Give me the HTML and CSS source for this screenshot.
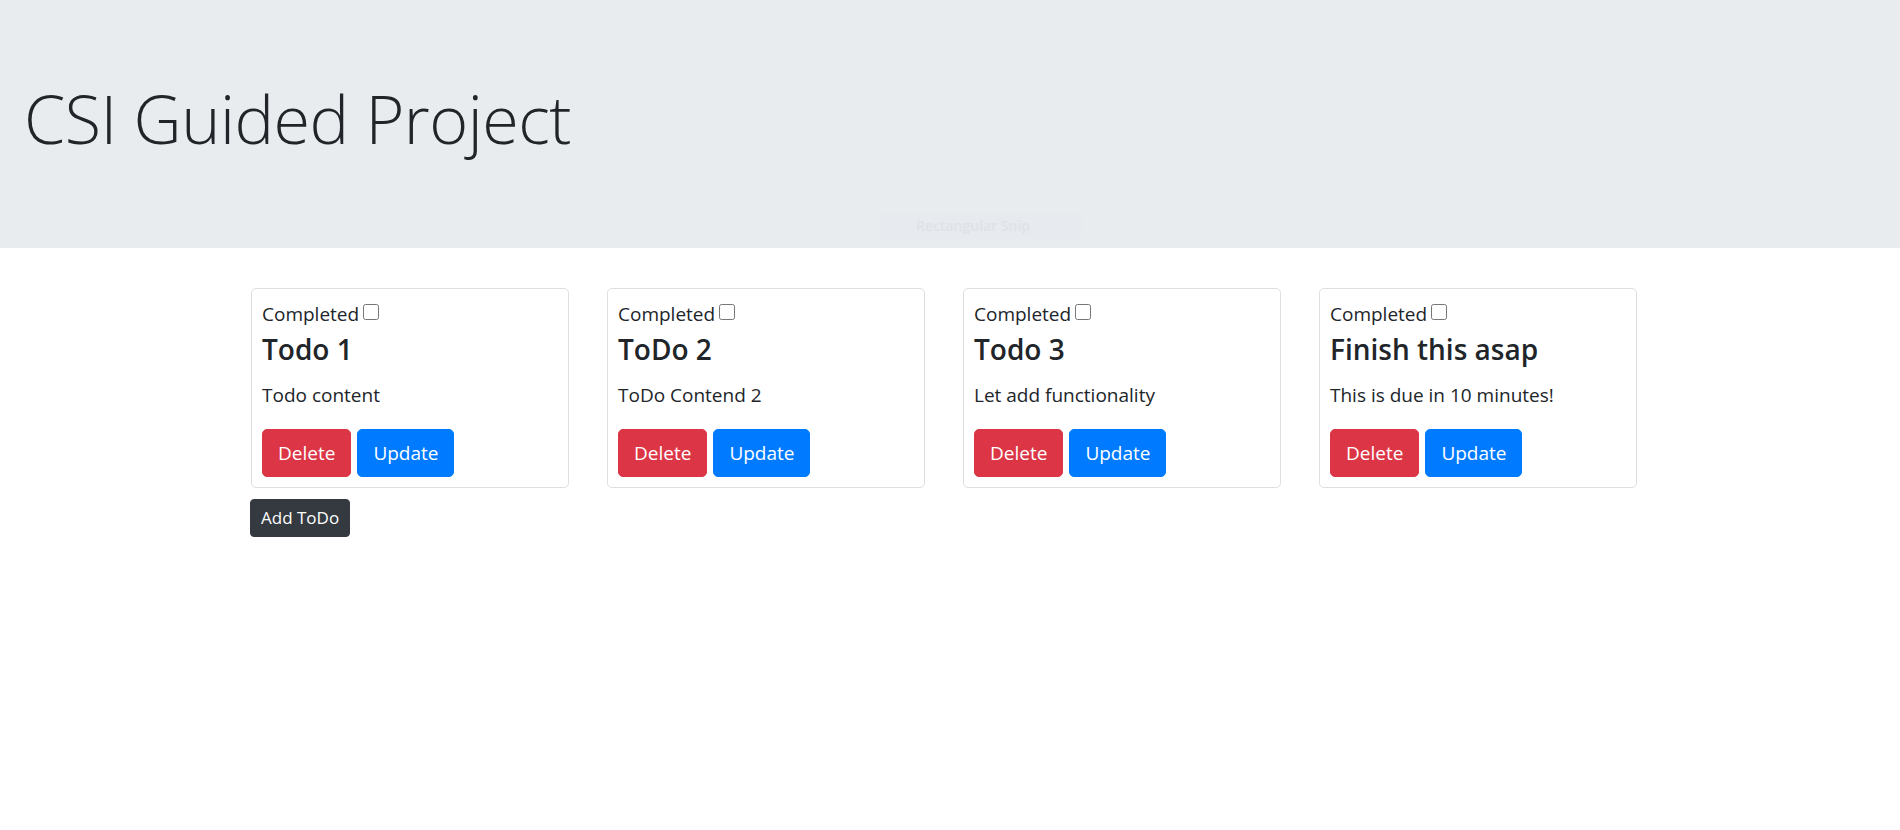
FILE: index.html
```html
<!DOCTYPE html>
<html lang="en">
<head>
<meta charset="utf-8">
<title>CSI Guided Project</title>
<link rel="stylesheet" href="styles.css">
</head>
<body>
<header class="jumbotron">
  <h1 class="display">CSI Guided Project</h1>
  <div class="snip"><span>Rectangular Snip</span></div>
</header>
<main class="container">
  <div class="row">
    <div class="card">
      <label class="done">Completed <input type="checkbox"></label>
      <h3 class="card-title">Todo 1</h3>
      <p class="card-text">Todo content</p>
      <div class="actions"><button class="btn btn-danger">Delete</button><button class="btn btn-primary">Update</button></div>
    </div>
    <div class="card">
      <label class="done">Completed <input type="checkbox"></label>
      <h3 class="card-title">ToDo 2</h3>
      <p class="card-text">ToDo Contend 2</p>
      <div class="actions"><button class="btn btn-danger">Delete</button><button class="btn btn-primary">Update</button></div>
    </div>
    <div class="card">
      <label class="done">Completed <input type="checkbox"></label>
      <h3 class="card-title">Todo 3</h3>
      <p class="card-text">Let add functionality</p>
      <div class="actions"><button class="btn btn-danger">Delete</button><button class="btn btn-primary">Update</button></div>
    </div>
    <div class="card">
      <label class="done">Completed <input type="checkbox"></label>
      <h3 class="card-title">Finish this asap</h3>
      <p class="card-text">This is due in 10 minutes!</p>
      <div class="actions"><button class="btn btn-danger">Delete</button><button class="btn btn-primary">Update</button></div>
    </div>
  </div>
  <button class="btn-add">Add ToDo</button>
</main>
</body>
</html>
```
FILE: styles.css
```css
* { box-sizing: border-box; }
html, body { margin: 0; padding: 0; }
body {
  font-family: "Open Sans", "Noto Sans", sans-serif;
  font-size: 19px;
  color: #212529;
  background: #fff;
}
.jumbotron {
  position: relative;
  background: #e9ecef;
  height: 248px;
  padding: 76px 24px 0;
  margin-bottom: 40px;
}
.display {
  margin: 0;
  font-size: 66.5px;
  font-weight: 300;
  line-height: 84px;
  letter-spacing: -0.5px;
}
.snip {
  position: absolute;
  left: 880px;
  top: 213px;
  width: 202px;
  height: 25px;
  background: #e7eaee;
  display: flex;
  align-items: center;
  padding-left: 36px;
}
.snip span {
  font-size: 14px;
  font-weight: 600;
  color: #dfe2e6;
}
.container {
  margin-left: 251px;
  width: 1386px;
}
.row {
  display: grid;
  grid-template-columns: repeat(4, 318px);
  column-gap: 38px;
}
.card {
  border: 1px solid rgba(0, 0, 0, 0.125);
  border-radius: 5px;
  padding: 10px;
  height: 200px;
}
.done {
  display: flex;
  align-items: center;
  height: 30px;
  line-height: 30px;
}
.done input {
  width: 16px;
  height: 16px;
  margin: 0 0 4px 4px;
}
.card-title {
  margin: 0 0 11px;
  font-size: 28px;
  line-height: 40px;
  font-weight: 600;
}
.card-text {
  margin: 0 0 19px;
  line-height: 30px;
}
.actions {
  display: flex;
  gap: 6px;
}
.btn {
  font-family: inherit;
  font-size: 19px;
  line-height: 30px;
  padding: 8px 15px;
  border: 1px solid transparent;
  border-radius: 5px;
  color: #fff;
}
.btn-danger { background: #dc3545; border-color: #dc3545; }
.btn-primary { background: #007bff; border-color: #007bff; }
.btn-add {
  margin-top: 11px;
  margin-left: -1px;
  font-family: inherit;
  font-size: 17px;
  line-height: 26px;
  padding: 5px 10px;
  border: 1px solid #343a40;
  border-radius: 4px;
  background: #343a40;
  color: #fff;
}
```
